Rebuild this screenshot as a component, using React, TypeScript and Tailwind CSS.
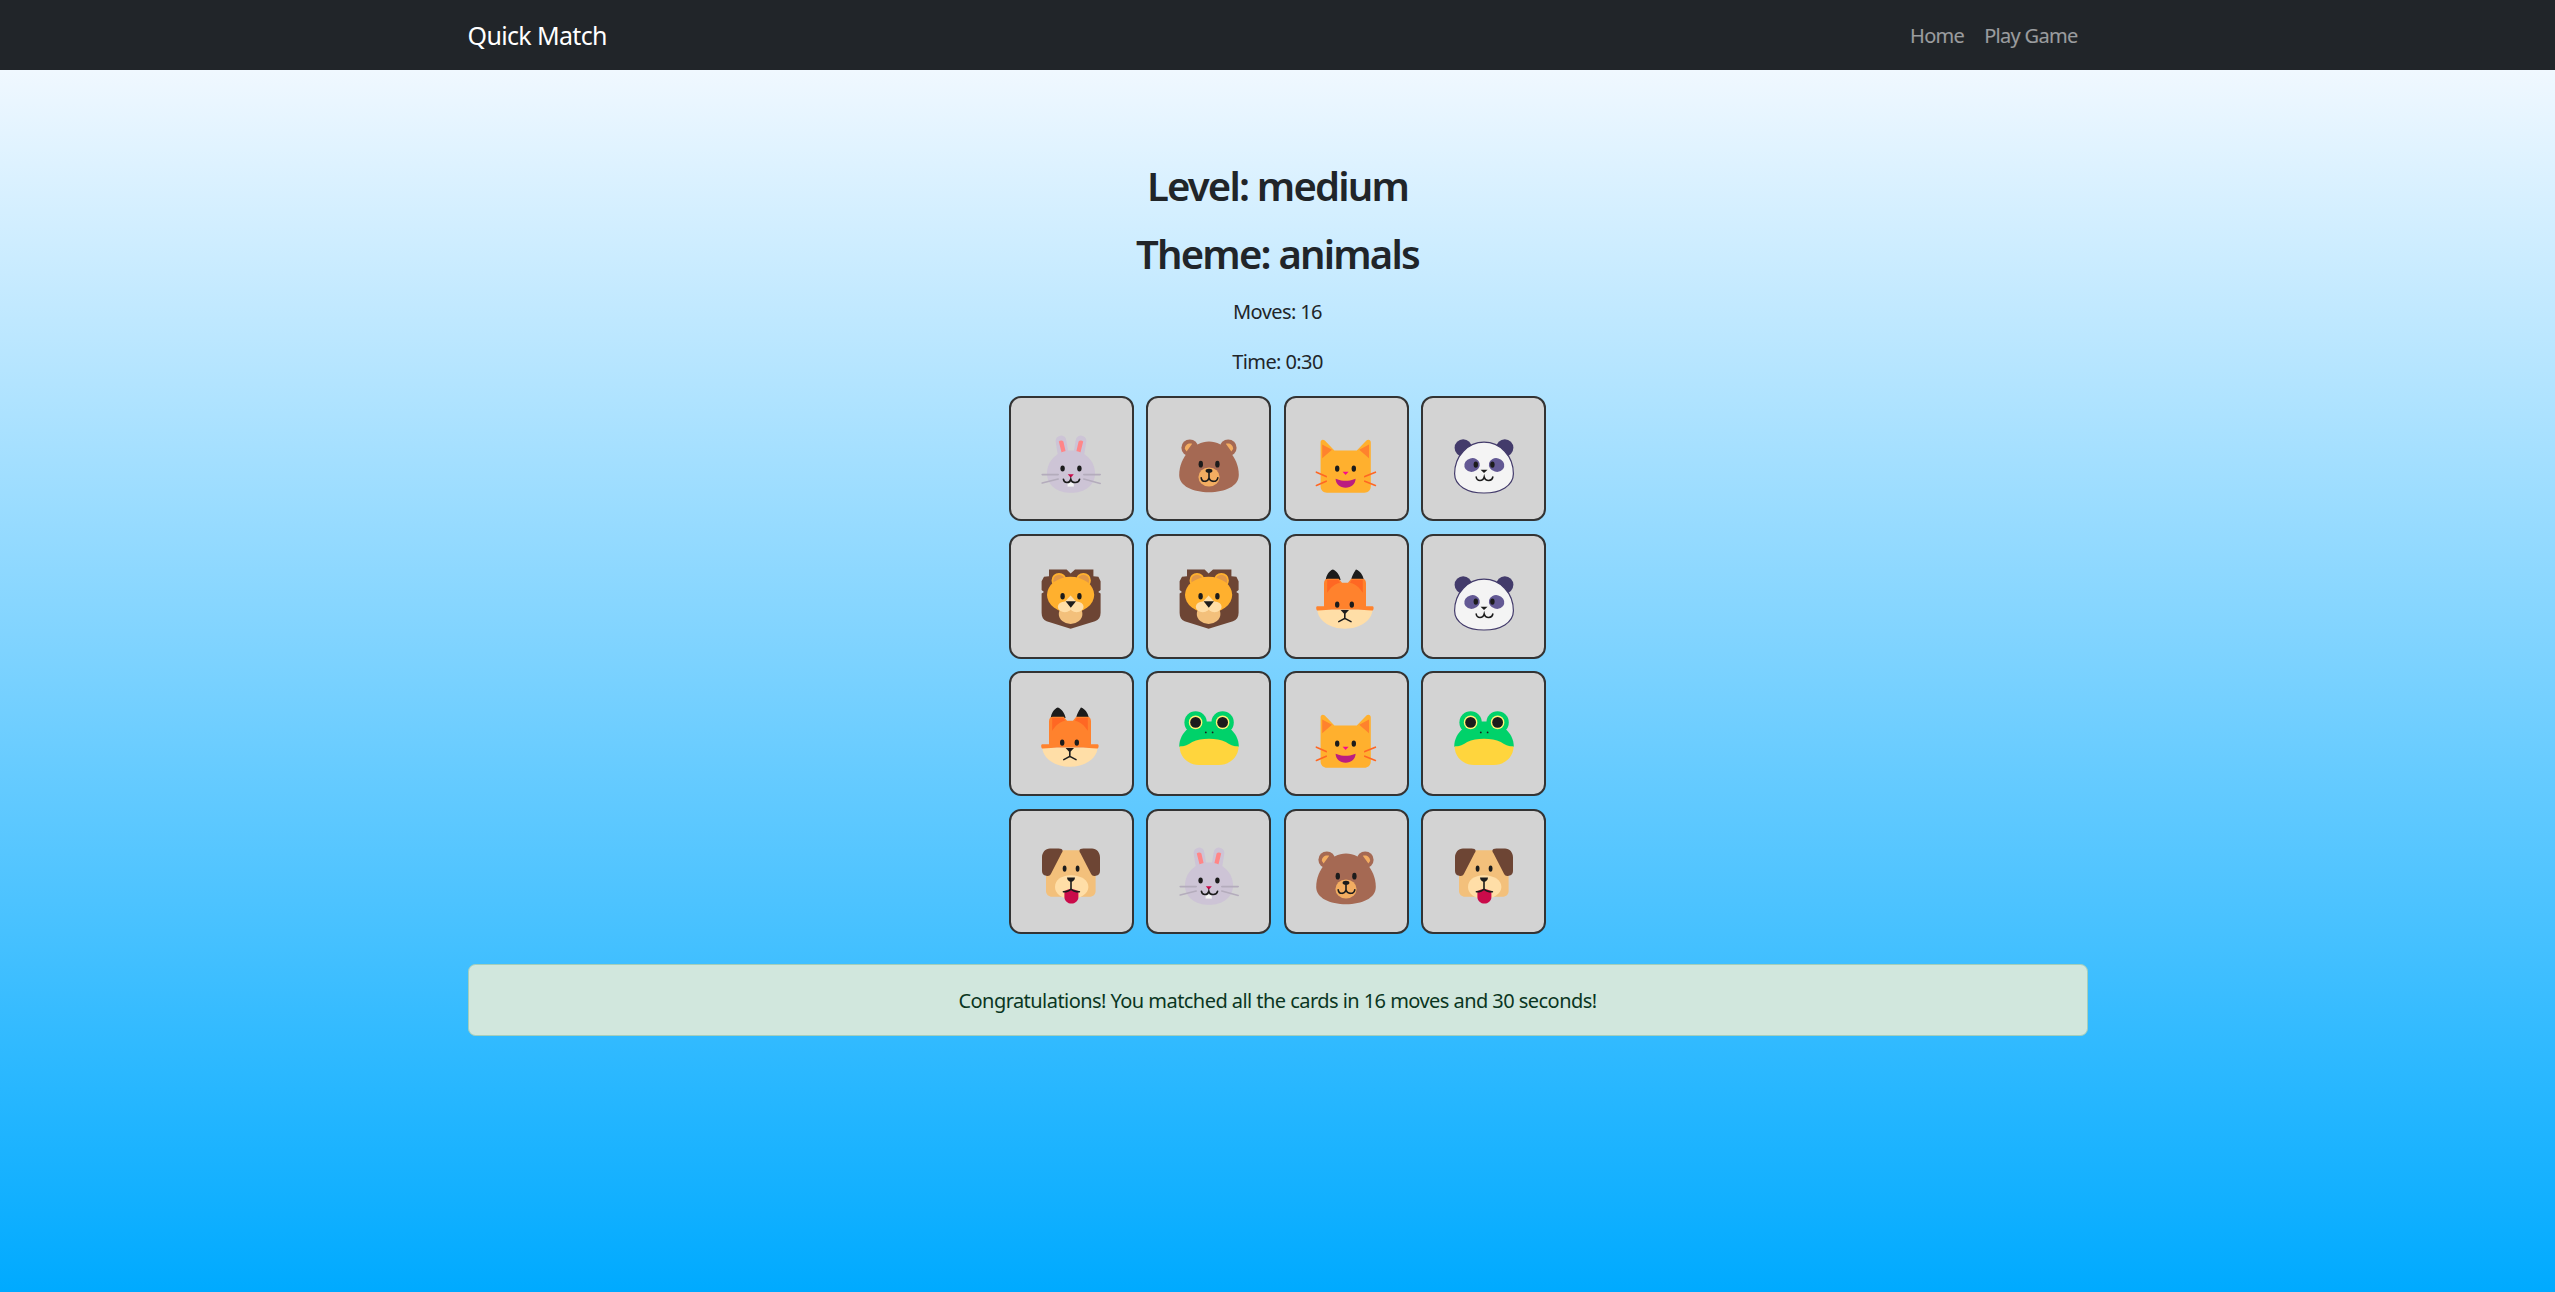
import React from "react";

// Flat animal faces, all drawn on a 32 unit box
const Eyes = ({ l, r, y, rx = 1.1, ry = 1.6 }: { l: number; r: number; y: number; rx?: number; ry?: number }) => (
  <>
    <ellipse cx={l} cy={y} rx={rx} ry={ry} fill="#1C1C1C" />
    <ellipse cx={r} cy={y} rx={rx} ry={ry} fill="#1C1C1C" />
  </>
);

const Rabbit = () => (
  <>
    <path d="M11 6 L12.3 14 M21 6 L19.7 14" stroke="#CDC4D6" strokeWidth="5.4" strokeLinecap="round" fill="none" />
    <path d="M9.9 6.3 C10.5 5.6 11.7 5.6 12.2 6.3 L13.9 13.8 L12 14.6 Z M22.1 6.3 C21.5 5.6 20.3 5.6 19.8 6.3 L18.1 13.8 L20 14.6 Z" fill="#FF8687" />
    <path d="M16 10.8 C22.6 10.8 28 15.8 28 22.2 C28 28.4 22.5 31.9 16 31.9 C9.5 31.9 4 28.4 4 22.2 C4 15.8 9.4 10.8 16 10.8 Z" fill="#CDC4D6" />
    <path d="M1.6 22.8 H9.6 M1.6 27 L9.6 25 M22.4 22.8 H30.6 M22.4 25 L30.6 27.2" stroke="#B4ACBC" strokeWidth="0.8" strokeLinecap="round" fill="none" />
    <path d="M14.3 26.8 H17.4 V28.8 H14.3 Z" fill="#F4F4F4" />
    <Eyes l={11.8} r={20.2} y={19.8} ry={1.5} />
    <path d="M14.4 22.6 H17.4 L15.9 24.4 Z" fill="#CA0B4A" />
    <path d="M12.2 25.1 C12.5 27.2 15.3 27.4 15.9 25.1 C16.5 27.4 19.9 27.2 20.3 25.1" stroke="#1C1C1C" strokeWidth="0.8" strokeLinecap="round" fill="none" />
  </>
);

const Bear = () => (
  <>
    <circle cx={6.4} cy={9.4} r={4.2} fill="#A56953" />
    <circle cx={25.6} cy={9.4} r={4.2} fill="#A56953" />
    <path d="M3.9 9.9 C4 7.9 5.7 6.8 7.6 7.4 L4.8 11.2 Z M28.1 9.9 C28 7.9 26.3 6.8 24.4 7.4 L27.2 11.2 Z" fill="#F3AD61" />
    <path d="M16 6.3 C23.5 6.3 30.9 14 30.9 23 C30.9 28.6 24 31.6 16 31.6 C8 31.6 1.1 28.6 1.1 23 C1.1 14 8.5 6.3 16 6.3 Z" fill="#A56953" />
    <ellipse cx={16} cy={24} rx={5.3} ry={4.8} fill="#F3AD61" />
    <Eyes l={11.9} r={20.2} y={17.6} ry={1.7} />
    <ellipse cx={16} cy={20.9} rx={1.7} ry={1} fill="#1C1C1C" />
    <path d="M16 21.5 V24.4 M12.1 24.4 C12.4 26.7 15.4 26.8 16 24.4 C16.6 26.8 20 26.7 20.4 24.4" stroke="#1C1C1C" strokeWidth="0.8" strokeLinecap="round" fill="none" />
  </>
);

const Cat = () => (
  <>
    <path d="M3.3 6.6 C3.3 5.3 4.6 5 5.4 5.8 L10.2 10.8 H21.4 L26.2 5.8 C27 5 28.4 5.3 28.4 6.6 V28.8 C28.4 30.6 27 31.9 25.2 31.9 H6.5 C4.7 31.9 3.3 30.6 3.3 28.8 Z" fill="#FFB02E" />
    <path d="M4.1 7.8 L9 10.4 L4.1 14.6 Z M27.5 7.8 L22.6 10.4 L27.5 14.6 Z" fill="#FF822D" />
    <Eyes l={11.6} r={19.9} y={19.8} />
    <path d="M14.3 21.4 H17.3 L15.8 23 Z" fill="#F70A8D" />
    <path d="M10.8 24.9 C13 25.8 14.4 25.9 15.8 25.9 C17.2 25.9 18.6 25.8 20.8 24.9 C20.7 27.6 18.6 29.4 15.8 29.4 C13 29.4 10.9 27.6 10.8 24.9 Z" fill="#BB1D80" />
    <path d="M1.2 21.6 L6.1 23.8 M1.2 28.2 L6.1 26.1 M25.4 23.8 L30.7 21.6 M25.4 26.1 L30.7 28.2" stroke="#FF6723" strokeWidth="0.8" strokeLinecap="round" fill="none" />
  </>
);

const Panda = () => (
  <>
    <circle cx={5.6} cy={9.4} r={4.3} fill="#433B6B" />
    <circle cx={26.4} cy={9.4} r={4.3} fill="#433B6B" />
    <path d="M16 6.6 C24 6.6 30.7 13.4 30.7 22.4 C30.7 28.4 24.2 32 16 32 C7.8 32 1.3 28.4 1.3 22.4 C1.3 13.4 8 6.6 16 6.6 Z" fill="#F4F4F4" stroke="#433B6B" strokeWidth="0.6" />
    <ellipse cx={10} cy={18} rx={3.9} ry={3.4} transform="rotate(-15 10 18)" fill="#635994" />
    <ellipse cx={22.3} cy={18} rx={3.9} ry={3.4} transform="rotate(15 22.3 18)" fill="#635994" />
    <Eyes l={11.9} r={20.2} y={17.8} />
    <path d="M14.3 20.4 H17.8 L16 22 Z" fill="#1C1C1C" />
    <path d="M12.1 24 C12.4 26.3 15.5 26.3 16.1 24 C16.7 26.3 20 26.3 20.4 24" stroke="#1C1C1C" strokeWidth="0.8" strokeLinecap="round" fill="none" />
  </>
);

const Lion = () => (
  <>
    <path d="M5 1.8 H13.8 L15.8 3.8 L18 1.8 H27.2 V5.1 L29.7 5.4 L30.8 7.6 V12 L29.6 13 L30.8 13.8 V23.4 C30.8 25.6 29.8 27 28 27.6 L15.8 31.4 L3.8 27.6 C2.2 27 1.3 25.6 1.3 23.4 V13.8 L2.5 13 L1.3 12 V7.6 L2.5 5.4 L5 5.1 Z" fill="#6D4534" />
    <circle cx={10} cy={7.2} r={3.3} fill="#E19747" stroke="#FFB02E" strokeWidth="0.9" />
    <circle cx={22.2} cy={7.2} r={3.3} fill="#E19747" stroke="#FFB02E" strokeWidth="0.9" />
    <ellipse cx={15.8} cy={14.4} rx={11.8} ry={9} fill="#FFB02E" />
    <ellipse cx={15.8} cy={24} rx={5.9} ry={5} fill="#F3C07B" />
    <path d="M15.8 14.7 L11 20 H20.6 Z" fill="#FFDEA7" />
    <ellipse cx={12.9} cy={20.4} rx={3.5} ry={2.7} fill="#FFDEA7" />
    <ellipse cx={18.8} cy={20.4} rx={3.5} ry={2.7} fill="#FFDEA7" />
    <Eyes l={11.8} r={20.2} y={15.1} />
    <path d="M13.3 17.6 H18.5 L15.9 20.9 Z" fill="#1C1C1C" />
  </>
);

const Fox = () => (
  <>
    <path d="M5.9 7 C6.2 4.5 7.6 2.4 9.4 1.8 C11.2 2.4 12.8 4.5 13.3 7 Z M18.6 7 C19.1 4.5 20.6 2.4 21 1.8 C22.9 2.4 24.5 4.5 24.9 7 Z" fill="#1C1C1C" />
    <path d="M5 8.6 C5 7.4 5.7 6.4 6.9 6.4 H12.4 L14 8.4 H17 L18.6 6.4 H24.2 C25.4 6.4 26 7.4 26 8.6 V20.5 H5 Z" fill="#FF822D" />
    <path d="M6.6 7 H12.2 L13 8.4 C10.4 9 8.2 10.8 6.6 13.4 Z M24.4 7 H18.8 L18 8.4 C20.6 9 22.8 10.8 24.4 13.4 Z" fill="#FF6723" />
    <path d="M1.6 21.8 H29.3 C29 27.4 22.9 31.4 15.4 31.4 C8 31.4 2 27.4 1.6 21.8 Z" fill="#FFDEA7" />
    <path d="M1.6 20.1 H29.3 C29.7 20.1 29.8 20.5 29.8 21 C29.8 21.7 29.6 22.3 29 22.3 C26 22.3 24 21.8 22 21.8 H9 C7 21.8 5 22.3 1.9 22.3 C1.3 22.3 1.1 21.7 1.1 21 C1.1 20.5 1.2 20.1 1.6 20.1 Z" fill="#FF822D" />
    <Eyes l={11.6} r={18.9} y={19.3} />
    <path d="M13.3 22 H17.5 L15.4 24.2 Z" fill="#1C1C1C" />
    <path d="M15.4 24 V26.3 M12.4 27.8 L15.4 26.2 L18.5 27.8" stroke="#1C1C1C" strokeWidth="0.8" strokeLinecap="round" fill="none" />
  </>
);

const Frog = () => (
  <>
    <circle cx={9.3} cy={9.2} r={5.6} fill="#00D26A" />
    <circle cx={22.8} cy={9.2} r={5.6} fill="#00D26A" />
    <path d="M16 8.8 C24 8.8 30.9 14 30.9 21.4 H1.1 C1.1 14 8 8.8 16 8.8 Z" fill="#00D26A" />
    <path d="M1.3 21.3 C3.8 21.3 5.8 20.2 7.6 19 C10 17.8 12.8 17.4 16 17.4 C19.2 17.4 22 17.8 24.4 19 C26.2 20.2 28.2 21.3 30.8 21.3 C30.7 26.6 26.4 30.5 21 30.5 H11 C5.6 30.5 1.4 26.6 1.3 21.3 Z" fill="#FFD53D" />
    <circle cx={9.3} cy={9.2} r={3.4} fill="#FFF478" />
    <circle cx={22.8} cy={9.2} r={3.4} fill="#FFF478" />
    <circle cx={9.3} cy={9.2} r={2.7} fill="#1C1C1C" />
    <circle cx={22.8} cy={9.2} r={2.7} fill="#1C1C1C" />
    <circle cx={14.4} cy={14.2} r={0.45} fill="#1C1C1C" />
    <circle cx={17.8} cy={14.2} r={0.45} fill="#1C1C1C" />
  </>
);

const Dog = () => (
  <>
    <path d="M11.8 4.6 H20.5 L28.3 12 V25 C28.3 26.7 27 27.9 25.3 27.9 H6.5 C4.8 27.9 3.5 26.7 3.5 25 V12 Z" fill="#F3C07B" />
    <path d="M5.5 3.8 H9.8 C11 3.8 11.8 4.2 11.8 4.9 C11.8 5.4 11.5 5.8 11.2 6.2 L6 16.4 C5.4 17.6 4.6 17.6 3.6 17.4 C2.2 17.2 1.5 16.4 1.5 15 V8.2 C1.5 5.8 3.2 3.8 5.5 3.8 Z" fill="#6D4534" />
    <path d="M26.5 3.8 H22.2 C21 3.8 20.2 4.2 20.2 4.9 C20.2 5.4 20.5 5.8 20.8 6.2 L26 16.4 C26.6 17.6 27.4 17.6 28.4 17.4 C29.8 17.2 30.5 16.4 30.5 15 V8.2 C30.5 5.8 28.8 3.8 26.5 3.8 Z" fill="#6D4534" />
    <path d="M16 17.1 C21 17.1 24.7 19.6 24.7 23 C24.7 26.4 20.5 29 16 29 C11.5 29 8 26.4 8 23 C8 19.6 11 17.1 16 17.1 Z" fill="#FFDEA7" />
    <ellipse cx={12.8} cy={13.8} rx={0.95} ry={1.6} fill="#1C1C1C" />
    <ellipse cx={19.3} cy={13.8} rx={0.95} ry={1.6} fill="#1C1C1C" />
    <path d="M12.7 25 C14 24.4 15 24 16 24 C17 24 18.2 24.4 19.7 25 V28 C19.7 30 18 31.3 16.2 31.3 C14.4 31.3 12.7 30 12.7 28 Z" fill="#CA0B4A" />
    <path d="M14 18.2 H18 C18 19.4 17 20.4 16 20.4 C15 20.4 14 19.4 14 18.2 Z" fill="#1C1C1C" />
    <path d="M16 20 V24 M12.2 25.4 C13.8 25.4 15.4 24.8 16 24 C16.6 24.8 18.4 25.4 20.2 25.4" stroke="#1C1C1C" strokeWidth="0.8" strokeLinecap="round" fill="none" />
  </>
);

const faces: Record<string, React.ReactNode> = {
  rabbit: <Rabbit />,
  bear: <Bear />,
  cat: <Cat />,
  panda: <Panda />,
  lion: <Lion />,
  fox: <Fox />,
  frog: <Frog />,
  dog: <Dog />,
};

const board = [
  "rabbit", "bear", "cat", "panda",
  "lion", "lion", "fox", "panda",
  "fox", "frog", "cat", "frog",
  "dog", "rabbit", "bear", "dog",
];

const App: React.FC = () => {
  return (
    <div className="flex min-h-screen flex-col font-['Noto_Sans',sans-serif] text-[20px] leading-[30px] text-[#212529]">
      {/* Navbar */}
      <nav className="h-[70px] shrink-0 bg-[#212529]">
        <div className="mx-auto flex h-full w-[1620px] items-center justify-between">
          <span className="text-[25px] tracking-[-0.65px] text-white">Quick Match</span>
          <div className="flex items-center pt-[2px] tracking-[-0.7px] text-white/55">
            <a className="px-[10px]">Home</a>
            <a className="px-[10px]">Play Game</a>
          </div>
        </div>
      </nav>

      <main className="flex-1 bg-[linear-gradient(#f0f8ff,#00aaff)] pt-[92px]">
        <div className="mx-auto w-[1620px] text-center">
          <h2 className="mb-[20px] text-[40px] leading-[48px] font-semibold tracking-[-1.8px]">Level: medium</h2>
          <h2 className="mb-[19px] text-[40px] leading-[48px] font-semibold tracking-[-1.8px]">Theme: animals</h2>
          <p className="mb-[20px] tracking-[-0.6px]">Moves: 16</p>
          <p className="mb-[19px] tracking-[-0.6px]">Time: 0:30</p>

          <div className="grid grid-cols-[repeat(4,125px)] justify-center gap-[12.5px]">
            {board.map((name, i) => (
              <div
                key={i}
                className="flex h-[125px] items-center justify-center rounded-[12px] border-2 border-[#333333] bg-[#d3d3d3]"
              >
                <svg viewBox="0 0 32 32" className="mt-[4px] h-[64px] w-[64px] overflow-visible">
                  {faces[name]}
                </svg>
              </div>
            ))}
          </div>

          <div className="mt-[30px] rounded-[7.5px] border border-[#a3cfbb] bg-[#d1e7dd] px-[20px] pt-[21px] pb-[19px] tracking-[-0.55px] text-[#0a3622]">
            Congratulations! You matched all the cards in 16 moves and 30 seconds!
          </div>
        </div>
      </main>
    </div>
  );
};

export default App;
